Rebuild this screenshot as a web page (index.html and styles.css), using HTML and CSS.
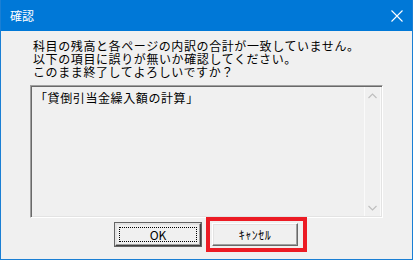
FILE: index.html
```html
<!DOCTYPE html>
<html lang="ja">
<head>
<meta charset="utf-8">
<link rel="stylesheet" href="styles.css">
</head>
<body>
<div class="window">
  <div class="titlebar">
    <span class="title">確認</span>
    <svg class="close" width="12" height="12" viewBox="0 0 12 12"><path d="M0.5 0.5L11.5 11.5M11.5 0.5L0.5 11.5" stroke="#fff" stroke-width="1.1" fill="none"/></svg>
  </div>
  <div class="client">
    <div class="message">
      <div>科目の残高と各ページの内訳の合計が一致していません。</div>
      <div>以下の項目に誤りが無いか確認してください。</div>
      <div>このまま終了してよろしいですか？</div>
    </div>
    <div class="listbox">
      <div class="listtext">「貸倒引当金繰入額の計算」</div>
      <div class="scrollbar">
        <div class="arrow"><svg width="9" height="6" viewBox="0 0 9 6"><path d="M0.5 5L4.5 1L8.5 5" stroke="#bfbfbf" stroke-width="1.2" fill="none"/></svg></div>
        <div class="track"></div>
        <div class="arrow"><svg width="9" height="6" viewBox="0 0 9 6"><path d="M0.5 1L4.5 5L8.5 1" stroke="#bfbfbf" stroke-width="1.2" fill="none"/></svg></div>
      </div>
    </div>
    <div class="buttons">
      <div class="btn btn-default"><span class="focus">OK</span></div>
      <div class="btn cancel">ｷｬﾝｾﾙ</div>
    </div>
  </div>
  <div class="highlight"></div>
</div>
</body>
</html>
```
FILE: styles.css
```css
html, body {
  margin: 0;
  padding: 0;
  background: #f0f0f0;
}
body {
  font-family: "Noto Sans CJK JP", "Noto Sans", sans-serif;
  font-size: 12px;
  color: #000;
}
.window {
  position: relative;
  width: 413px;
  height: 260px;
  box-sizing: border-box;
  border: 1px solid #1a7fd4;
  border-top: none;
  background: #f0f0f0;
  display: flex;
  flex-direction: column;
}
.titlebar {
  height: 31px;
  flex: none;
  background: #0078d7;
  display: flex;
  align-items: center;
  justify-content: space-between;
  padding: 0 9px 0 9px;
}
.title {
  color: #fff;
  font-size: 12px;
  line-height: 14px;
}
.close {
  display: block;
}
.client {
  flex: 1;
  display: flex;
  flex-direction: column;
}
.message {
  margin: 8px 0 0 32px;
  line-height: 13px;
  letter-spacing: 0.6px;
}
.listbox {
  margin: 7px 0 0 29px;
  width: 353px;
  height: 133px;
  box-sizing: border-box;
  border-style: solid;
  border-width: 1px;
  border-color: #a0a0a0 #ffffff #ffffff #a0a0a0;
  box-shadow: inset 1px 1px 0 #696969, inset -1px -1px 0 #e3e3e3;
  display: flex;
  padding: 1px;
}
.listtext {
  flex: 1;
  padding: 4px 0 0 3px;
  line-height: 13px;
  letter-spacing: 0.6px;
}
.scrollbar {
  width: 17px;
  display: flex;
  flex-direction: column;
  background: #f0f0f0;
  border-left: 1px solid #fafafa;
  border-right: 1px solid #fafafa;
  box-sizing: border-box;
}
.arrow {
  height: 17px;
  display: flex;
  align-items: center;
  justify-content: center;
}
.track {
  flex: 1;
}
.buttons {
  display: flex;
  gap: 11px;
  margin: 5px 0 0 114px;
}
.btn {
  width: 86px;
  height: 23px;
  box-sizing: border-box;
  background: #f0f0f0;
  border-style: solid;
  border-width: 1px;
  border-color: #ffffff #696969 #696969 #ffffff;
  box-shadow: inset -1px -1px 0 #a0a0a0, inset 1px 1px 0 #e3e3e3;
  display: flex;
  align-items: center;
  justify-content: center;
  font-size: 12px;
  line-height: 14px;
}
.cancel {
  letter-spacing: 0.5px;
}
.btn-default {
  border-color: #e3e3e3 #404040 #404040 #e3e3e3;
  outline: 1px solid #646464;
  outline-offset: 0;
  padding: 3px;
}
.focus {
  flex: 1;
  align-self: stretch;
  display: flex;
  align-items: center;
  justify-content: center;
  border: 1px dotted #000;
}
.highlight {
  position: absolute;
  left: 205px;
  top: 217px;
  width: 101px;
  height: 35px;
  box-sizing: border-box;
  border: 4px solid #ec1b24;
}
```
